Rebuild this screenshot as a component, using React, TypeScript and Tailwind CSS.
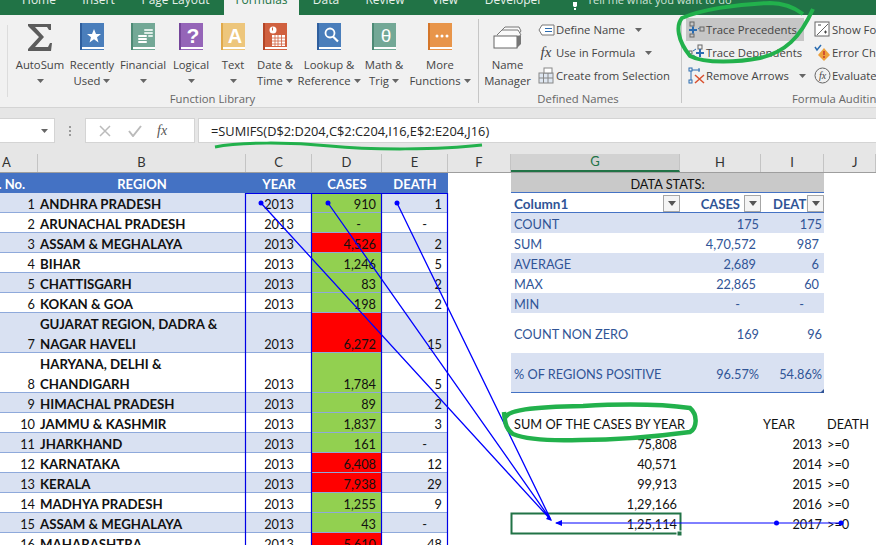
import React from "react";

const tabs = [
  { label: "Home", w: "w-[62px]" },
  { label: "Insert", w: "w-[57px]" },
  { label: "Page Layout", w: "w-[97px]" },
  { label: "Formulas", w: "w-[75px]", active: true },
  { label: "Data", w: "w-[54px]" },
  { label: "Review", w: "w-[64px]" },
  { label: "View", w: "w-[56px]" },
  { label: "Developer", w: "w-[81px]" },
];

const Caret = () => (
  <svg width="7" height="4" viewBox="0 0 7 4" className="inline-block shrink-0">
    <path d="M0 0h7L3.5 4z" fill="#666" />
  </svg>
);

// the book shaped icons of the function library
const Book = ({ color, spine, children }: { color: string; spine: string; children?: React.ReactNode }) => (
  <svg width="24" height="28" viewBox="0 0 24 28">
    <rect x="0" y="0" width="24" height="25" fill={color} />
    <rect x="0" y="0" width="2" height="27" fill={spine} />
    <rect x="2" y="24" width="22" height="2" fill="#fff" />
    <rect x="2" y="26" width="22" height="1" fill={color} />
    {children}
  </svg>
);

const glyph = "fill-white font-bold [font-family:'Liberation_Sans',sans-serif]";

const bigButtons: { top: string; bottom?: string; w: string; icon: React.ReactNode }[] = [
  {
    top: "AutoSum",
    w: "w-[52px]",
    icon: (
      <svg width="26" height="28" viewBox="0 0 26 28">
        <path d="M1 1h23v6h-2l-2-3H8l9 10-9 10h13l2-4h2l-1 8H1v-2l11-12L1 3z" fill="#5c5c5c" />
      </svg>
    ),
  },
  {
    top: "Recently",
    bottom: "Used",
    w: "w-[52px]",
    icon: (
      <Book color="#4a7ebb" spine="#2f5f9e">
        <path d="M14 6l2 5h5l-4 3.200 1.500 5.300L14 16.300 9.500 19.500 11 14.200 7 11h5z" fill="#fff" />
      </Book>
    ),
  },
  {
    top: "Financial",
    w: "w-[50px]",
    icon: (
      <Book color="#73a896" spine="#4d8a75">
        <rect x="7" y="12" width="9" height="2" rx="1" fill="#fff" />
        <rect x="7" y="15" width="9" height="2" rx="1" fill="#fff" />
        <rect x="7" y="18" width="9" height="2" rx="1" fill="#fff" />
        <rect x="13" y="6" width="9" height="2" rx="1" fill="#dfeee8" />
        <rect x="13" y="9" width="9" height="2" rx="1" fill="#dfeee8" />
        <rect x="17" y="12" width="5" height="2" rx="1" fill="#dfeee8" />
      </Book>
    ),
  },
  {
    top: "Logical",
    w: "w-[46px]",
    icon: (
      <Book color="#9565b8" spine="#75469a">
        <text x="14" y="20" textAnchor="middle" fontSize="21" className={glyph}>?</text>
      </Book>
    ),
  },
  {
    top: "Text",
    w: "w-[38px]",
    icon: (
      <Book color="#edc67c" spine="#e0a94a">
        <text x="14" y="20" textAnchor="middle" fontSize="20" className={glyph}>A</text>
      </Book>
    ),
  },
  {
    top: "Date &",
    bottom: "Time",
    w: "w-[46px]",
    icon: (
      <Book color="#d0603f" spine="#b44526">
        <circle cx="10" cy="7" r="3.500" fill="#fff" />
        <rect x="9" y="4.500" width="1" height="3" fill="#d0603f" />
        <path d="M9 12h13v11H9z" fill="#fff" />
        <path d="M12 12v11M15 12v11M18.500 12v11M9 15h13M9 18h13M9 21h13" stroke="#d0603f" strokeWidth="0.800" />
      </Book>
    ),
  },
  {
    top: "Lookup &",
    bottom: "Reference",
    w: "w-[62px]",
    icon: (
      <Book color="#4a7ebb" spine="#2f5f9e">
        <circle cx="13" cy="10" r="4.500" fill="none" stroke="#fff" strokeWidth="1.800" />
        <path d="M16 13.500l5 5" stroke="#fff" strokeWidth="2.200" />
      </Book>
    ),
  },
  {
    top: "Math &",
    bottom: "Trig",
    w: "w-[48px]",
    icon: (
      <Book color="#73a896" spine="#4d8a75">
        <text x="14" y="19" textAnchor="middle" fontSize="19" className="fill-white [font-family:'Liberation_Sans',sans-serif]">θ</text>
      </Book>
    ),
  },
  {
    top: "More",
    bottom: "Functions",
    w: "w-[64px]",
    icon: (
      <Book color="#e8954a" spine="#d4762a">
        <circle cx="9" cy="13" r="1.500" fill="#fff" />
        <circle cx="14" cy="13" r="1.500" fill="#fff" />
        <circle cx="19" cy="13" r="1.500" fill="#fff" />
      </Book>
    ),
  },
];

const BigButton = ({ b }: { b: (typeof bigButtons)[number] }) => (
  <div className={`${b.w} flex flex-col items-center pt-[8px] shrink-0`}>
    <div className="h-[28px] mb-[6px]">{b.icon}</div>
    <div className="leading-[16px] whitespace-nowrap">{b.top}</div>
    <div className="leading-[16px] whitespace-nowrap flex items-center gap-[3px] h-[16px]">
      {b.bottom}
      <Caret />
    </div>
  </div>
);

const SmallRow = ({ icon, label, caret, className = "" }: { icon: React.ReactNode; label: string; caret?: boolean; className?: string }) => (
  <div className={`h-[23px] flex items-center whitespace-nowrap ${className}`}>
    <span className="w-[18px] h-[18px] shrink-0 flex items-center justify-center">{icon}</span>
    <span className="ml-[1px] pt-[2px]">{label}</span>
    {caret && (
      <span className="ml-[10px] flex">
        <Caret />
      </span>
    )}
  </div>
);

const Ic = ({ children }: { children: React.ReactNode }) => (
  <svg width="17" height="17" viewBox="0 0 17 17" fill="none">
    {children}
  </svg>
);

const tracePrec = (
  <Ic>
    <rect x="2" y="1" width="4" height="4" stroke="#666" />
    <rect x="12" y="6" width="4" height="4" stroke="#666" />
    <rect x="2" y="13" width="4" height="3" stroke="#666" />
    <path d="M1 9h8M5 5.500v7" stroke="#2b6cb0" strokeWidth="2" />
    <path d="M10 8l1.500-1" stroke="#2b6cb0" />
  </Ic>
);
const traceDep = (
  <Ic>
    <rect x="1" y="7" width="3" height="3" stroke="#666" />
    <rect x="10" y="1" width="4" height="4" stroke="#666" />
    <path d="M8 9h8M12 5v8" stroke="#2b6cb0" strokeWidth="2" />
    <path d="M5 7l3-2M5 11l3 2" stroke="#2b6cb0" />
  </Ic>
);
const removeArrows = (
  <Ic>
    <rect x="1" y="1" width="3" height="3" stroke="#2b6cb0" />
    <rect x="1" y="13" width="3" height="3" stroke="#2b6cb0" />
    <path d="M3 4v9M4 3l8 0M11 1v4" stroke="#2b6cb0" />
    <path d="M7 8l9 8M16 8l-9 8" stroke="#d9502e" strokeWidth="1.500" />
  </Ic>
);

const App = () => {
  return (
    <div className="relative w-[876px] h-[545px] overflow-hidden bg-white [font-family:'Open_Sans',sans-serif]">
      {/* TAB STRIP */}
      <div className="h-[15px] bg-[#217346] flex items-end overflow-hidden text-[12px] text-[#e6f0ea] pl-[8px]">
        {tabs.map((t) => (
          <div
            key={t.label}
            className={`${t.w} h-[15px] flex justify-center items-end pb-[7px] leading-[16px] shrink-0 ${
              t.active ? "bg-[#f1f1f1] text-[#217346]" : ""
            }`}
          >
            {t.label}
          </div>
        ))}
        <div className="h-[15px] flex items-end pb-[7px] leading-[16px] ml-[18px] whitespace-nowrap text-[11px] text-[#cfe3d8]">
          <svg width="6" height="8" viewBox="0 0 6 8" className="mr-[9px] mb-[-2px] shrink-0">
            <path d="M1 0h4v4L4 5H2L1 4zM2 6h2v2H2z" fill="#fff" />
          </svg>
          Tell me what you want to do
        </div>
      </div>

      {/* RIBBON */}
      <div className="h-[93px] bg-[#f1f1f1] border-b border-[#d4d4d4] flex text-[11.3px] text-[#444] overflow-hidden">
        <div className="w-[8px] shrink-0 border-r border-[#dcdcdc] my-[10px]" />
        <div className="w-[470px] pl-[6px] flex flex-col shrink-0">
          <div className="flex h-[76px]">
            {bigButtons.map((b) => (
              <BigButton key={b.top} b={b} />
            ))}
          </div>
          <div className="text-center leading-[16px] text-[#666] mt-[1px] pr-[67px] pt-px">Function Library</div>
        </div>
        <div className="w-px bg-[#c6c6c6] my-[4px] shrink-0" />
        <div className="w-[202px] flex flex-col shrink-0">
          <div className="flex h-[76px]">
            <div className="w-[57px] flex flex-col items-center pt-[8px] shrink-0">
              <div className="h-[28px] mb-[6px]">
                <svg width="30" height="28" viewBox="0 0 30 28" fill="none">
                  <path d="M7 9l5-5h14l2 4-3 4" stroke="#777" fill="#fafafa" />
                  <path d="M4 12l5-5h16l3 5" stroke="#777" fill="#fafafa" />
                  <rect x="1" y="13" width="23" height="12" stroke="#666" fill="#fff" />
                  <path d="M24 13l4-1v9l-4 4z" fill="#777" />
                </svg>
              </div>
              <div className="leading-[16px]">Name</div>
              <div className="leading-[16px]">Manager</div>
            </div>
            <div className="pt-[3px] ml-[1px]">
              <SmallRow
                label="Define Name"
                caret
                icon={
                  <svg width="17" height="12" viewBox="0 0 17 12" fill="none">
                    <path d="M4 1h12v10H4L1 6z" stroke="#777" fill="#fff" />
                    <path d="M7 4.500h7M7 7.500h7" stroke="#2b6cb0" />
                  </svg>
                }
              />
              <SmallRow
                label="Use in Formula"
                caret
                icon={<span className="italic text-[15px] leading-none text-[#444] [font-family:'Liberation_Serif',serif]">fx</span>}
              />
              <SmallRow
                label="Create from Selection"
                icon={
                  <Ic>
                    <rect x="1" y="6" width="14" height="10" fill="#dfe7f1" stroke="#888" />
                    <path d="M5.500 6v10M10 6v10M1 11h14" stroke="#888" />
                    <rect x="6" y="1" width="8" height="5" fill="#fff" stroke="#888" />
                  </Ic>
                }
              />
            </div>
          </div>
          <div className="text-center leading-[16px] text-[#666] mt-[1px] pr-[4px] pt-px">Defined Names</div>
        </div>
        <div className="w-px bg-[#c6c6c6] my-[4px] shrink-0" />
        <div className="flex-1 flex flex-col min-w-0">
          <div className="flex h-[76px] pl-[4px]">
            <div className="w-[118px] pt-[3px] shrink-0">
              <SmallRow label="Trace Precedents" icon={tracePrec} className="bg-[#c6c6c6] pl-[1px]" />
              <SmallRow label="Trace Dependents" icon={traceDep} className="pl-[1px]" />
              <SmallRow label="Remove Arrows" caret icon={removeArrows} className="pl-[1px]" />
            </div>
            <div className="pt-[3px] ml-[9px]">
              <SmallRow
                label="Show Formulas"
                icon={
                  <Ic>
                    <rect x="1" y="1" width="14" height="14" fill="#fff" stroke="#666" />
                    <path d="M3 14L14 3" stroke="#666" />
                    <path d="M4 4h3M10 11h3M11.500 9.500v3" stroke="#444" />
                  </Ic>
                }
              />
              <SmallRow
                label="Error Checking"
                icon={
                  <Ic>
                    <path d="M1 3l2 3 4-5" stroke="#2b6cb0" strokeWidth="1.500" />
                    <path d="M10 4l6 7-6 6-6-6z" fill="#eda13c" />
                    <path d="M10 7v4M10 12v2" stroke="#c7382a" strokeWidth="1.500" />
                  </Ic>
                }
              />
              <SmallRow
                label="Evaluate Formula"
                icon={
                  <svg width="17" height="17" viewBox="0 0 17 17" fill="none">
                    <circle cx="8.500" cy="8.500" r="7.500" stroke="#666" />
                    <text x="8.500" y="12" textAnchor="middle" fontSize="10" fontStyle="italic" fill="#444" className="[font-family:'Liberation_Serif',serif]">fx</text>
                  </svg>
                }
              />
            </div>
          </div>
          <div className="leading-[16px] text-[#666] mt-[1px] pl-[110px] whitespace-nowrap pt-px">Formula Auditing</div>
        </div>
      </div>

      {/* FORMULA BAR */}
      <div className="h-[46px] bg-[#e6e6e6] pt-[10px]">
        <div className="h-[25px] flex items-stretch">
          <div className="w-[55px] bg-white border border-[#d4d4d4] border-l-0 flex items-center justify-end pr-[6px] shrink-0">
            <Caret />
          </div>
          <div className="w-[30px] shrink-0 flex flex-col items-center justify-center gap-[2px]">
            <span className="w-[2px] h-[2px] bg-[#999]" />
            <span className="w-[2px] h-[2px] bg-[#999]" />
            <span className="w-[2px] h-[2px] bg-[#999]" />
          </div>
          <div className="w-[110px] bg-white border border-[#d4d4d4] shrink-0 flex items-center">
            <svg width="12" height="12" viewBox="0 0 12 12" className="ml-[13px]">
              <path d="M1 1l10 10M11 1L1 11" stroke="#bbb" strokeWidth="1.500" />
            </svg>
            <svg width="14" height="12" viewBox="0 0 14 12" className="ml-[17px]">
              <path d="M1 6l4 5 8-10" stroke="#bbb" strokeWidth="2" fill="none" />
            </svg>
            <span className="ml-[15px] italic text-[14px] text-[#555] [font-family:'Liberation_Serif',serif]">fx</span>
          </div>
          <div className="flex-1 ml-[3px] bg-white border-y border-l border-[#d4d4d4] pl-[12px] pt-[2px] flex items-center text-[12.8px] text-[#222] whitespace-nowrap">
            =SUMIFS(D$2:D204,C$2:C204,I16,E$2:E204,J16)
          </div>
        </div>
      </div>

      <Sheet />
      <Overlay />
    </div>
  );
};

const colCls = "grid grid-cols-[38px_208px_66px_70px_66px_63px_169px_81px_63px_52px] grid-rows-[minmax(0,1fr)]";

type Row = { no: number; name: string[]; cases: string; death: string; red?: boolean };

const rows: Row[] = [
  { no: 1, name: ["ANDHRA PRADESH"], cases: "910", death: "1" },
  { no: 2, name: ["ARUNACHAL PRADESH"], cases: "-", death: "-" },
  { no: 3, name: ["ASSAM & MEGHALAYA"], cases: "4,526", death: "2", red: true },
  { no: 4, name: ["BIHAR"], cases: "1,246", death: "5" },
  { no: 5, name: ["CHATTISGARH"], cases: "83", death: "2" },
  { no: 6, name: ["KOKAN & GOA"], cases: "198", death: "2" },
  { no: 7, name: ["GUJARAT REGION, DADRA &", "NAGAR HAVELI"], cases: "6,272", death: "15", red: true },
  { no: 8, name: ["HARYANA, DELHI &", "CHANDIGARH"], cases: "1,784", death: "5" },
  { no: 9, name: ["HIMACHAL PRADESH"], cases: "89", death: "2" },
  { no: 10, name: ["JAMMU & KASHMIR"], cases: "1,837", death: "3" },
  { no: 11, name: ["JHARKHAND"], cases: "161", death: "-" },
  { no: 12, name: ["KARNATAKA"], cases: "6,408", death: "12", red: true },
  { no: 13, name: ["KERALA"], cases: "7,938", death: "29", red: true },
  { no: 14, name: ["MADHYA PRADESH"], cases: "1,255", death: "9" },
  { no: 15, name: ["ASSAM & MEGHALAYA"], cases: "43", death: "-" },
  { no: 16, name: ["MAHARASHTRA"], cases: "5,610", death: "48", red: true },
];

type Side = { g?: string; h?: string; i?: string; j?: string; kind: "band" | "plain" | "black" | "blank"; pad?: boolean };

// right hand block, one entry for each row of the left table
const side: Side[] = [
  { kind: "blank" },
  { g: "COUNT", h: "175", i: "175", kind: "band" },
  { g: "SUM", h: "4,70,572", i: "987", kind: "plain", pad: true },
  { g: "AVERAGE", h: "2,689", i: "6", kind: "band", pad: true },
  { g: "MAX", h: "22,865", i: "60", kind: "plain", pad: true },
  { g: "MIN", h: "-", i: "-", kind: "band", pad: true },
  { g: "COUNT NON ZERO", h: "169", i: "96", kind: "plain" },
  { g: "% OF REGIONS POSITIVE", h: "96.57%", i: "54.86%", kind: "band" },
  { kind: "blank" },
  { g: "SUM OF THE CASES BY YEAR", i: "YEAR", j: "DEATH", kind: "black" },
  { g: "75,808", i: "2013", j: ">=0", kind: "black" },
  { g: "40,571", i: "2014", j: ">=0", kind: "black" },
  { g: "99,913", i: "2015", j: ">=0", kind: "black" },
  { g: "1,29,166", i: "2016", j: ">=0", kind: "black" },
  { g: "1,25,114", i: "2017", j: ">=0", kind: "black" },
  { kind: "blank" },
];

const Filter = () => (
  <span className="absolute right-0 top-[2px] w-[17px] h-[17px] bg-[#f4f4f4] border border-[#a6a6a6] flex items-center justify-center">
    <svg width="8" height="5" viewBox="0 0 8 5">
      <path d="M0 0h8L4 5z" fill="#555" />
    </svg>
  </span>
);

const Sheet = () => {
  const heads = ["A", "B", "C", "D", "E", "F", "G", "H", "I", "J"];
  const headCls = "bg-[#4472c4] text-white font-bold text-[13px] text-center";
  return (
    <div className="text-[12.75px] [font-family:Lato,sans-serif] text-[#111]">
      {/* COLUMN LETTERS */}
      <div className={`${colCls} h-[19px] bg-[#e6e6e6] border-b border-[#9e9e9e]`}>
        {heads.map((h) => (
          <div
            key={h}
            className={`flex items-center border-r border-[#c4c4c4] text-[13px] text-[#333] ${
              h === "A" ? "pl-[2px]" : h === "J" ? "pl-[28px]" : "justify-center"
            } ${h === "G" ? "bg-[#d2d2d2] border-b-2 border-b-[#217346] text-[#217346]" : ""}`}
          >
            {h}
          </div>
        ))}
      </div>

      {/* HEADER ROW */}
      <div className={`${colCls} h-[20px] leading-[22px]`}>
        <div className={`${headCls} flex justify-end pr-[13px] overflow-hidden whitespace-nowrap`}>S. No.</div>
        <div className={headCls}>REGION</div>
        <div className={headCls}>YEAR</div>
        <div className={headCls}>CASES</div>
        <div className={headCls}>DEATH</div>
        <div />
        <div className="col-span-3 bg-[#c9c9c9] text-center border-b border-[#4472c4]">DATA STATS:</div>
        <div />
      </div>

      {rows.map((r, idx) => {
        const band = idx % 2 === 0;
        const s = side[idx];
        const tall = r.name.length > 1;
        const h = tall ? "h-[40px]" : "h-[20px]";
        const leftBg = band ? "bg-[#d9e1f2]" : "bg-white";
        const line = "border-b border-[#8ea9db]";
        const rightBg = s.kind === "band" ? "bg-[#d9e1f2]" : "";
        const rightTxt = s.kind === "black" ? "text-[#111]" : "text-[#305496]";
        const numPad = s.pad ? "pr-[5px]" : "pr-[2px]";
        const low = idx === 7 ? "border-b border-[#4472c4]" : "";
        return (
          <div key={r.no} className={`${colCls} ${h} leading-[16px]`}>
            <div className={`${leftBg} ${line} flex items-end justify-end pr-[3px]`}>{r.no}</div>
            <div className={`${leftBg} ${line} pl-[2px] font-bold text-[13.25px] flex flex-col justify-end`}>
              <div className="-mb-[2px] leading-[20px]">
                {r.name.map((n) => (
                  <div key={n} className="whitespace-nowrap">
                    {n}
                  </div>
                ))}
              </div>
            </div>
            <div className={`${leftBg} ${line} flex items-end justify-center`}>2013</div>
            <div className={`${r.red ? "bg-[#ff0000]" : "bg-[#92d050]"} ${line} flex items-end justify-end ${r.cases === "-" ? "pr-[21px]" : "pr-[6px]"}`}>
              {r.cases}
            </div>
            <div className={`${leftBg} ${line} flex items-end justify-end ${r.death === "-" ? "pr-[21px]" : "pr-[6px]"}`}>
              {r.death}
            </div>
            <div />

            {idx === 0 ? (
              <>
                <div className="relative border-b border-[#4472c4] font-bold text-[13.5px] leading-[22px] text-[#305496] pl-[3px]">
                  Column1
                  <Filter />
                </div>
                <div className="relative border-b border-[#4472c4] font-bold text-[13px] leading-[22px] text-[#305496] text-right pr-[21px]">
                  CASES
                  <Filter />
                </div>
                <div className="relative border-b border-[#4472c4] font-bold text-[13px] leading-[22px] text-[#305496] overflow-hidden pl-[12px] whitespace-nowrap">
                  DEATHS
                  <Filter />
                </div>
                <div />
              </>
            ) : (
              <>
                <div
                  className={`${rightBg} ${rightTxt} ${low} pt-[2px] flex items-center whitespace-nowrap ${
                    s.kind === "black" && s.g && /^[0-9]/.test(s.g) ? "justify-end pr-[3px]" : "pl-[3px]"
                  }`}
                >
                  {s.g}
                </div>
                <div className={`${rightBg} ${rightTxt} ${low} pt-[2px] flex items-center justify-end ${s.h === "-" ? "pr-[21px]" : numPad}`}>
                  {s.h}
                </div>
                <div
                  className={`${rightBg} ${rightTxt} ${low} pt-[2px] flex items-center ${s.i === "YEAR" ? "justify-start pl-[2px]" : "justify-end"} ${
                    s.i === "-" ? "pr-[20px]" : numPad
                  }`}
                >
                  {s.i}
                </div>
                <div className="pt-[2px] flex items-center pl-[3px] whitespace-nowrap">{s.j}</div>
              </>
            )}
          </div>
        );
      })}
    </div>
  );
};

// trace arrows, selection box and the hand drawn green marks lie over the sheet
const Overlay = () => (
  <svg width="876" height="545" viewBox="0 0 876 545" fill="none" className="absolute left-0 top-0 pointer-events-none">
    <path d="M511.500 513.500h169v20h-169z" stroke="#217346" strokeWidth="2" />
    <rect x="677" y="531" width="5" height="5" fill="#217346" stroke="#fff" />
    <path d="M824 389v4h-4z" fill="#305496" />

    <path d="M245.500 545V193.500H447.500V545M311.500 193.500V545M381.500 193.500V545" stroke="#0000e6" strokeWidth="1.200" />
    <path d="M261 203L551 520M328 203L551 520M397 203L551 520" stroke="#0000ff" strokeWidth="1.300" />
    <circle cx="261" cy="203" r="2.500" fill="#0000ff" />
    <circle cx="328" cy="203" r="2.500" fill="#0000ff" />
    <circle cx="397" cy="203" r="2.500" fill="#0000ff" />
    <path d="M552 521l-6-2 3-4z" fill="#0000ff" />
    <path d="M556 523H841" stroke="#0000ff" strokeWidth="1" />
    <path d="M555 523l7-3v6z" fill="#0000ff" />
    <circle cx="776.500" cy="523" r="2.500" fill="#0000ff" />
    <circle cx="841" cy="523" r="2.500" fill="#0000ff" />

    <path d="M215 147C240 142 290 142 330 146S440 150 482 145" stroke="#22b14c" strokeWidth="3" />
    <path
      d="M803 14C795 8 785 3 770 3C735 4 700 10 682 18C676 25 677 40 690 56C705 64 740 62 760 58C785 52 800 38 813 9"
      stroke="#22b14c"
      strokeWidth="4"
    />
    <path
      d="M505 418C508 410 530 407 583 406C620 404 660 404 690 408C698 415 697 428 690 432C660 436 620 440 580 440C550 441 525 439 513 434C507 430 505 425 504 412"
      stroke="#22b14c"
      strokeWidth="4.500"
    />
  </svg>
);

export default App;
